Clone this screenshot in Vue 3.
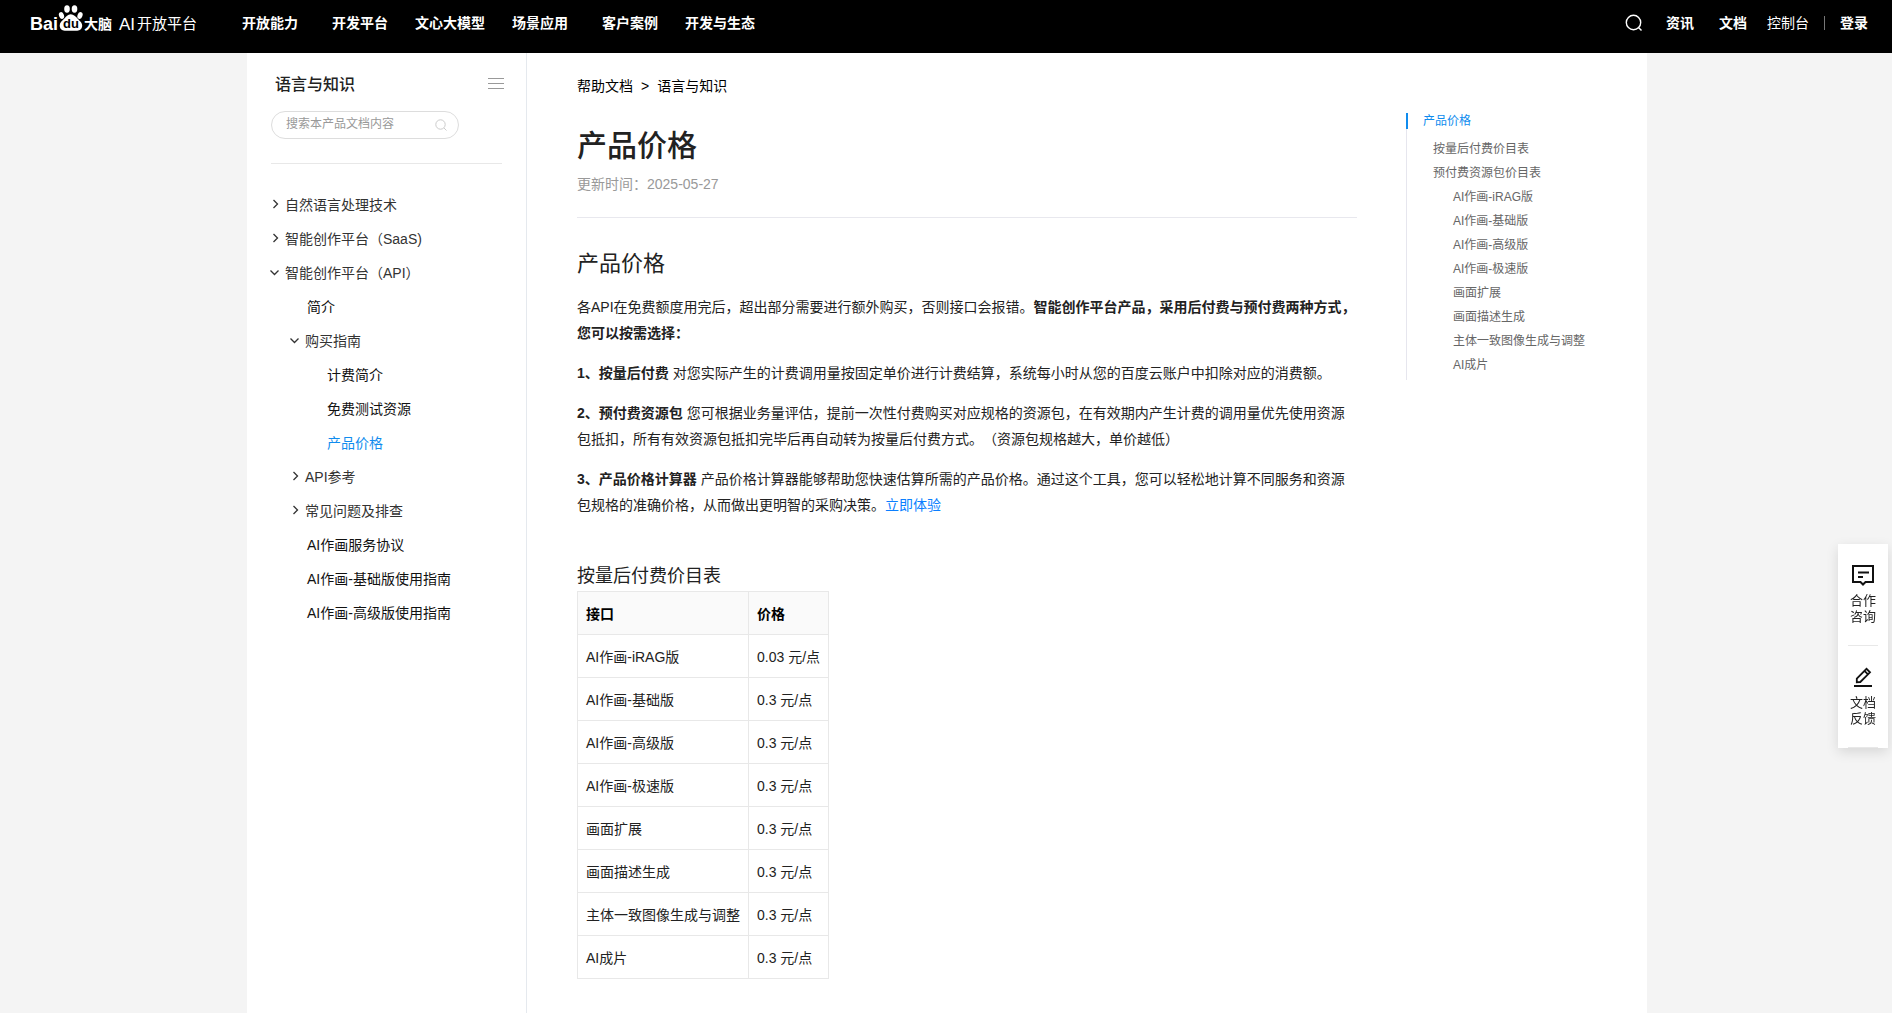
<template>
  <div class="page">
    <header class="header">
      <a href="#" class="logo" aria-label="百度大脑 AI开放平台">
        <svg width="168" height="32" viewBox="0 0 168 32">
          <g fill="#fff">
            <text class="logo-latin" x="0" y="27">Bai</text>
            <ellipse cx="31.500" cy="12.500" rx="2.500" ry="3.400" transform="rotate(-20 31.5 12.5)" />
            <ellipse cx="37" cy="6" rx="2.800" ry="3.700" />
            <ellipse cx="44.500" cy="6" rx="2.800" ry="3.700" />
            <ellipse cx="50" cy="12.500" rx="2.500" ry="3.400" transform="rotate(20 50 12.5)" />
            <path d="M40.700 11.200c-3 0-4.500 2.300-6.300 4.300-2.500 2.500-4.700 3.900-4.700 7 0 3 2 5.200 5 5.200h12.500c3 0 5-2.200 5-5.200 0-3.100-2.700-4.700-4.700-7-1.800-2-3.800-4.300-6.800-4.300z" />
            <text class="logo-cn" x="54" y="26">大脑</text>
            <text class="logo-sub" x="89" y="27">AI</text>
            <text class="logo-sub-cn" x="107" y="26">开放平台</text>
          </g>
          <text class="logo-du" x="33" y="25">du</text>
        </svg>
      </a>
      <nav class="nav">
        <a v-for="n in navs" :key="n" href="#">{{ n }}</a>
      </nav>
      <div class="tools">
        <button class="icon-btn" aria-label="搜索">
          <svg width="17" height="18" viewBox="0 0 17 18" fill="none" stroke="#fff" stroke-width="1.400">
            <circle cx="8.500" cy="8.500" r="7.200" />
            <path d="M13.500 13.500l3 3" />
          </svg>
        </button>
        <a href="#" class="news">资讯</a>
        <a href="#" class="docs">文档</a>
        <a href="#" class="console">控制台</a>
        <i class="sep"></i>
        <a href="#">登录</a>
      </div>
    </header>

    <div class="container">
      <aside class="sidebar">
        <div class="side-head">
          <h2>语言与知识</h2>
          <button class="icon-btn" aria-label="收起目录">
            <svg width="16" height="12" viewBox="0 0 16 12" stroke="#999">
              <path d="M0 .5h16M0 5.500h16M0 10.500h16" />
            </svg>
          </button>
        </div>
        <div class="search">
          <input type="text" placeholder="搜索本产品文档内容" aria-label="搜索本产品文档内容" />
          <button class="icon-btn" aria-label="搜索文档">
            <svg width="12" height="12" viewBox="0 0 12 12" fill="none" stroke="#ccc">
              <circle cx="5.500" cy="5.500" r="4.700" />
              <path d="M9 9l2.500 2.500" />
            </svg>
          </button>
        </div>
        <ul class="menu">
          <li v-for="m in menu" :key="m.text" :class="['lv' + m.level, m.arrow ? 'branch' : 'leaf', { active: m.active }]">
            <a href="#">
              <svg v-if="m.arrow" width="10" height="10" viewBox="0 0 10 10" fill="none" stroke="#333" stroke-width="1.300">
                <path v-if="m.arrow === 'right'" d="M2.500 1l4 4-4 4" />
                <path v-else d="M-.5 3.500l4 4 4-4" />
              </svg>
              <span>{{ m.text }}</span>
            </a>
          </li>
        </ul>
      </aside>

      <main class="content">
        <div class="crumb">
          <a href="#">帮助文档</a><span>&gt;</span><a href="#">语言与知识</a>
        </div>
        <h1>产品价格</h1>
        <div class="updated">更新时间：2025-05-27</div>
        <article>
          <h2>产品价格</h2>
          <p>各API在免费额度用完后，超出部分需要进行额外购买，否则接口会报错。<strong>智能创作平台产品，采用后付费与预付费两种方式，您可以按需选择：</strong></p>
          <p><strong>1、按量后付费</strong> 对您实际产生的计费调用量按固定单价进行计费结算，系统每小时从您的百度云账户中扣除对应的消费额。</p>
          <p><strong>2、预付费资源包</strong> 您可根据业务量评估，提前一次性付费购买对应规格的资源包，在有效期内产生计费的调用量优先使用资源包抵扣，所有有效资源包抵扣完毕后再自动转为按量后付费方式。（资源包规格越大，单价越低）</p>
          <p><strong>3、产品价格计算器</strong> 产品价格计算器能够帮助您快速估算所需的产品价格。通过这个工具，您可以轻松地计算不同服务和资源包规格的准确价格，从而做出更明智的采购决策。<a href="#">立即体验</a></p>
          <h3>按量后付费价目表</h3>
          <table>
            <thead>
              <tr>
                <th>接口</th>
                <th>价格</th>
              </tr>
            </thead>
            <tbody>
              <tr v-for="p in prices" :key="p.name">
                <td>{{ p.name }}</td>
                <td>{{ p.price }} 元/点</td>
              </tr>
            </tbody>
          </table>
        </article>
      </main>

      <nav class="toc">
        <a href="#" class="current">产品价格</a>
        <a v-for="t in toc" :key="t.text" href="#" :class="'toc' + t.level">{{ t.text }}</a>
      </nav>
    </div>

    <div class="float">
      <a href="#">
        <svg width="24" height="24" viewBox="0 0 24 24" fill="none" stroke="#111" stroke-width="2">
          <path d="M2 3h20v16h-7.500L12 21.500 9.500 19H2z" />
          <path d="M7 9.500h11M7 14h5" />
        </svg>
        <span>合作<br />咨询</span>
      </a>
      <a href="#">
        <svg width="24" height="24" viewBox="0 0 24 24" fill="none" stroke="#111">
          <path stroke-width="1.800" d="M5.800 17.200v-3.700l9.700-9.700 3.500 3.500-9.700 9.700zM13.500 5.800l3.500 3.500" />
          <path stroke-width="2" d="M3 21h18" />
        </svg>
        <span>文档<br />反馈</span>
      </a>
    </div>
  </div>
</template>

<script setup>
const navs = ['开放能力', '开发平台', '文心大模型', '场景应用', '客户案例', '开发与生态'];

const menu = [
  { level: 1, arrow: 'right', text: '自然语言处理技术' },
  { level: 1, arrow: 'right', text: '智能创作平台（SaaS)' },
  { level: 1, arrow: 'down', text: '智能创作平台（API）' },
  { level: 2, text: '简介' },
  { level: 2, arrow: 'down', text: '购买指南' },
  { level: 3, text: '计费简介' },
  { level: 3, text: '免费测试资源' },
  { level: 3, text: '产品价格', active: true },
  { level: 2, arrow: 'right', text: 'API参考' },
  { level: 2, arrow: 'right', text: '常见问题及排查' },
  { level: 2, text: 'AI作画服务协议' },
  { level: 2, text: 'AI作画-基础版使用指南' },
  { level: 2, text: 'AI作画-高级版使用指南' }
];

const prices = [
  { name: 'AI作画-iRAG版', price: '0.03' },
  { name: 'AI作画-基础版', price: '0.3' },
  { name: 'AI作画-高级版', price: '0.3' },
  { name: 'AI作画-极速版', price: '0.3' },
  { name: '画面扩展', price: '0.3' },
  { name: '画面描述生成', price: '0.3' },
  { name: '主体一致图像生成与调整', price: '0.3' },
  { name: 'AI成片', price: '0.3' }
];

const toc = [
  { level: 1, text: '按量后付费价目表' },
  { level: 1, text: '预付费资源包价目表' },
  ...prices.map((p) => ({ level: 2, text: p.name }))
];
</script>

<style>
body {
  margin: 0;
  background: #f4f4f4;
}
</style>

<style scoped>
.page {
  min-height: 100vh;
  display: flex;
  flex-direction: column;
  font-family: "Liberation Sans", "Noto Sans CJK SC", sans-serif;
  font-size: 14px;
  color: #222;
  text-spacing-trim: space-all;
}
a { color: inherit; text-decoration: none; }
h1, h2, h3, p, ul { margin: 0; padding: 0; }
svg { display: block; flex: none; overflow: visible; }
.icon-btn { padding: 0; border: none; background: none; cursor: pointer; }

/* header */
.header {
  display: flex;
  align-items: center;
  height: 46px;
  padding: 0 24px 7px 30px;
  background: #000;
  color: #fff;
  font-weight: 700;
}
.logo { width: 195px; }
.logo svg { margin-top: -8px; }
.logo-latin { font-size: 18px; font-weight: 700; }
.logo-cn { font-size: 14px; font-weight: 700; }
.logo-sub { font-size: 17px; font-weight: 400; }
.logo-sub-cn { font-size: 15px; font-weight: 400; }
.logo-du { font-size: 13px; font-weight: 700; fill: #000; }
.nav { display: flex; }
.nav a { width: 90px; text-align: center; }
.nav a, .tools a { padding-bottom: 2px; }
.tools { display: flex; align-items: center; margin-left: auto; }
.news { margin-left: 24px; }
.docs { margin-left: 25px; }
.console { margin-left: 20px; font-weight: 400; }
.sep { width: 1px; height: 14px; margin: 0 15px; background: #777; }

/* columns */
.container {
  flex: 1;
  display: flex;
  align-items: stretch;
  box-sizing: border-box;
  width: 100%;
  max-width: 1402px;
  margin: 0 auto;
  border-left: 2px solid #f4f4f4;
  background: #fff;
}
.sidebar {
  flex: none;
  box-sizing: border-box;
  width: 280px;
  padding: 18px 24px 0;
  border-right: 1px solid #e5e9ee;
}
.side-head {
  display: flex;
  align-items: center;
  justify-content: space-between;
  height: 26px;
  margin-right: -2px;
  padding-left: 4px;
}
.side-head h2 { padding-bottom: 2px; font-size: 16px; font-weight: 500; }
.search {
  display: flex;
  align-items: center;
  box-sizing: border-box;
  width: 188px;
  height: 28px;
  margin-top: 14px;
  padding: 0 11px 0 14px;
  border: 1px solid #ddd;
  border-radius: 14px;
}
.search input {
  flex: 1;
  min-width: 0;
  padding: 0 0 2px;
  border: none;
  outline: none;
  background: none;
  font: inherit;
  font-size: 12px;
}
.search input::placeholder { color: #999; }
.menu {
  margin-top: 24px;
  padding-top: 23px;
  border-top: 1px solid #e8e8e8;
  list-style: none;
}
.menu a { display: flex; align-items: center; gap: 4px; height: 34px; color: #333; }
.menu .leaf a { color: #111; }
.menu .active a { color: #108cee; }
.lv2.branch { padding-left: 20px; }
.lv2.leaf { padding-left: 36px; }
.lv3.leaf { padding-left: 56px; }

/* article */
.content { flex: 1; min-width: 0; padding: 22px 49px 34px 50px; }
.crumb { line-height: 22px; color: #000; }
.crumb span { margin: 0 8px; }
h1 { margin-top: 26px; font-size: 30px; line-height: 45px; font-weight: 500; }
.updated {
  padding: 5px 0 22px;
  border-bottom: 1px solid #e8e8ee;
  line-height: 22px;
  color: #999;
}
article h2 { margin-top: 30px; font-size: 22px; line-height: 32px; font-weight: 400; }
article p { margin-top: 14px; line-height: 26px; }
article p a { color: #0b7fff; }
article h3 { margin: 44px 0 1px; font-size: 18px; line-height: 28px; font-weight: 400; }
table { border-collapse: collapse; }
th, td {
  height: 42px;
  padding: 0 8px;
  border: 1px solid #e8e8e8;
  text-align: left;
  white-space: nowrap;
}
th { background: #fafafa; color: #000; }

/* page outline */
.toc {
  flex: none;
  align-self: flex-start;
  display: flex;
  flex-direction: column;
  box-sizing: border-box;
  width: 241px;
  margin-top: 60px;
  padding-bottom: 3px;
  border-left: 1px solid #e6e6ee;
  font-size: 12px;
  line-height: 24px;
  color: #666;
}
.toc .current {
  margin: 0 0 8px -1px;
  padding-left: 15px;
  border-left: 2px solid #108cee;
  line-height: 16px;
  color: #108cee;
}
.toc1 { padding-left: 26px; }
.toc2 { padding-left: 46px; }

/* contact panel */
.float {
  position: fixed;
  right: 4px;
  top: 544px;
  width: 50px;
  background: #fff;
  box-shadow: 0 4px 12px rgba(0, 0, 0, 0.12);
  font-size: 13px;
  line-height: 16px;
}
.float a {
  display: flex;
  flex-direction: column;
  align-items: center;
  gap: 6px;
  margin: 0 10px;
  padding: 19px 0 20px;
  border-bottom: 1px solid #e8e8e8;
}
</style>
